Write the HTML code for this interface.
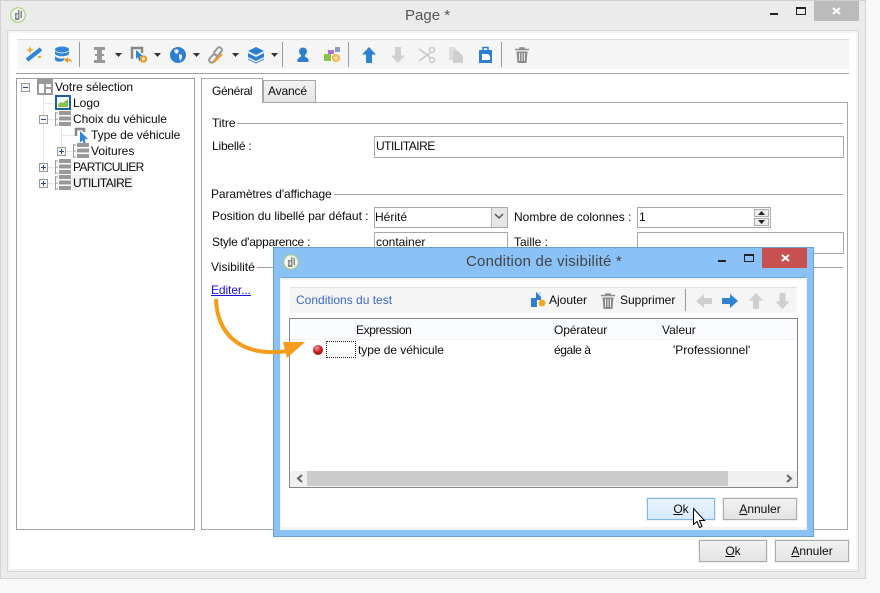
<!DOCTYPE html>
<html lang="fr"><head><meta charset="utf-8"><title>Page</title>
<style>
html,body{margin:0;padding:0;width:880px;height:593px;overflow:hidden;background:#f8f8f8}
body{position:relative;font-family:"Liberation Sans",sans-serif;font-size:12px;color:#0a0a0a}
div{position:absolute;box-sizing:border-box}
.t{white-space:nowrap;line-height:16px;height:16px}
.in{background:#fff;border:1px solid #a8a8a8}
.btn{background:linear-gradient(#f2f2f2,#e4e4e4);border:1px solid #ababab;outline:1px solid #f0f0f0;text-align:center;line-height:21px;color:#0a0a0a}
.btn u{text-decoration:underline}
.ln{background:#a0a0a0;height:1px}
svg{position:absolute;left:0;top:0}
</style></head><body>
<!-- main window -->
<div style="left:0;top:0;width:866px;height:579px;background:#ebebeb;border:1px solid #d4d4d4;border-top-color:#d0d0d0"></div>
<div style="left:7px;top:30px;width:852px;height:542px;background:#fff;border:1px solid #d8d8d8;border-bottom:0;border-top:1px solid #d8d8d8"></div>
<div style="left:8px;top:31px;width:2px;height:539px;background:#f4f4f4"></div>
<div style="left:856px;top:31px;width:2px;height:539px;background:#f4f4f4"></div>
<div style="left:8px;top:31px;width:850px;height:2px;background:#f4f4f4"></div>
<div style="left:8px;top:569px;width:850px;height:2px;background:#f0f0f0"></div>
<div style="left:7px;top:571px;width:852px;height:1px;background:#d8d8d8"></div>
<div class="t" style="left:405px;top:8px;font-size:15px;color:#555">Page *</div>
<div style="left:814px;top:1px;width:45px;height:20px;background:#bbb"></div>
<!-- main toolbar -->
<div style="left:17px;top:39px;width:832px;height:30px;background:#f5f5f5;border-top:1px solid #ddd"></div>
<div class="ln" style="left:16px;top:73px;width:833px"></div>
<!-- tree -->
<div style="left:16px;top:78px;width:179px;height:452px;background:#fff;border:1px solid #a0a0a0"></div>
<div style="left:72px;top:175px;width:61px;height:16px;background:#f0f0f0"></div>
<div class="t" style="left:55px;top:79px;letter-spacing:-.05px">Votre sélection</div>
<div class="t" style="left:73px;top:95px">Logo</div>
<div class="t" style="left:73px;top:111px;letter-spacing:-.05px">Choix du véhicule</div>
<div class="t" style="left:91px;top:127px;letter-spacing:-.05px">Type de véhicule</div>
<div class="t" style="left:91px;top:143px">Voitures</div>
<div class="t" style="left:73px;top:159px;letter-spacing:-.7px">PARTICULIER</div>
<div class="t" style="left:73px;top:175px;letter-spacing:-.5px">UTILITAIRE</div>
<!-- tabs -->
<div style="left:201px;top:102px;width:647px;height:428px;background:#fff;border:1px solid #a8a8a8"></div>
<div style="left:263px;top:80px;width:53px;height:23px;background:linear-gradient(#f2f2f2,#e6e6e6);border:1px solid #a8a8a8"></div>
<div style="left:201px;top:78px;width:62px;height:25px;background:#fff;border:1px solid #a8a8a8;border-bottom:0"></div>
<div class="t" style="left:212px;top:83px;letter-spacing:-.35px">Général</div>
<div class="t" style="left:268px;top:83px;letter-spacing:-.15px">Avancé</div>
<!-- form -->
<div class="t" style="left:212px;top:115px">Titre</div>
<div class="ln" style="left:237px;top:123px;width:606px"></div>
<div class="t" style="left:212px;top:138px;letter-spacing:-.2px">Libellé :</div>
<div class="in" style="left:374px;top:136px;width:470px;height:22px"></div>
<div class="t" style="left:376px;top:138px;letter-spacing:-.5px">UTILITAIRE</div>
<div class="t" style="left:211px;top:186px;letter-spacing:-.1px">Paramètres d'affichage</div>
<div class="ln" style="left:334px;top:194px;width:509px"></div>
<div class="t" style="left:212px;top:208px;letter-spacing:-.03px">Position du libellé par défaut :</div>
<div class="in" style="left:374px;top:207px;width:134px;height:21px"></div>
<div style="left:491px;top:208px;width:16px;height:19px;background:#e6e6e6;border-left:1px solid #b8b8b8"></div>
<div class="t" style="left:375px;top:209px">Hérité</div>
<div class="t" style="left:514px;top:209px">Nombre de colonnes :</div>
<div class="in" style="left:637px;top:207px;width:134px;height:21px"></div>
<div class="t" style="left:639px;top:209px">1</div>
<div style="left:754px;top:209px;width:15px;height:8px;background:#eee;border:1px solid #aaa"></div>
<div style="left:754px;top:218px;width:15px;height:8px;background:#eee;border:1px solid #aaa"></div>
<div class="t" style="left:212px;top:234px;letter-spacing:-.22px">Style d'apparence :</div>
<div class="in" style="left:374px;top:232px;width:134px;height:22px"></div>
<div class="t" style="left:376px;top:234px">container</div>
<div class="t" style="left:514px;top:234px">Taille :</div>
<div class="in" style="left:637px;top:232px;width:207px;height:22px"></div>
<div class="t" style="left:211px;top:259px">Visibilité</div>
<div class="ln" style="left:257px;top:267px;width:586px"></div>
<div class="t" style="left:211px;top:282px;color:#1a0dd8;text-decoration:underline;letter-spacing:-.1px">Editer...</div>
<!-- main buttons -->
<div class="btn" style="left:699px;top:540px;width:68px;height:22px"><u>O</u>k</div>
<div class="btn" style="left:775px;top:540px;width:74px;height:22px"><u>A</u>nnuler</div>
<!-- dialog -->
<div style="left:273px;top:247px;width:541px;height:290px;background:#8ac2f8;border:1px solid #6b9fd0"></div>
<div style="left:280px;top:277px;width:527px;height:253px;background:#fff;border:1px solid #f0f0f0;outline:0;border-top:1px solid #6fa6da"></div>
<div style="left:281px;top:278px;width:525px;height:2px;background:#f2f2f2"></div>
<div style="left:281px;top:527px;width:525px;height:2px;background:#f2f2f2"></div>
<div class="t" style="left:466px;top:254px;font-size:15px;letter-spacing:.2px;color:#444">Condition de visibilité *</div>
<div style="left:762px;top:248px;width:45px;height:20px;background:#c75050"></div>
<div style="left:290px;top:287px;width:507px;height:26px;background:#f5f5f5;border-top:1px solid #e0e0e0"></div>
<div class="t" style="left:296px;top:292px;color:#3a66c8">Conditions du test</div>
<div class="t" style="left:549px;top:292px">Ajouter</div>
<div class="t" style="left:620px;top:292px">Supprimer</div>
<div style="left:289px;top:318px;width:509px;height:170px;background:#fff;border:1px solid #85858e"></div>
<div style="left:290px;top:319px;width:507px;height:21px;background:#fbfcfe;border-bottom:1px solid #edf2f9"></div>
<div style="left:355px;top:319px;width:1px;height:20px;background:#eef2f8"></div>
<div style="left:553px;top:319px;width:1px;height:20px;background:#eef2f8"></div>
<div style="left:661px;top:319px;width:1px;height:20px;background:#eef2f8"></div>
<div class="t" style="left:356px;top:322px;letter-spacing:-.4px">Expression</div>
<div class="t" style="left:554px;top:322px;letter-spacing:-.1px">Opérateur</div>
<div class="t" style="left:662px;top:322px">Valeur</div>
<div style="left:326px;top:341px;width:30px;height:17px;border:1px dotted #222"></div>
<div class="t" style="left:358px;top:342px;letter-spacing:-.05px">type de véhicule</div>
<div class="t" style="left:554px;top:342px;letter-spacing:-.4px">égale à</div>
<div class="t" style="left:673px;top:342px">'Professionnel'</div>
<div style="left:290px;top:471px;width:507px;height:16px;background:#f0f0f0"></div>
<div style="left:307px;top:471px;width:421px;height:15px;background:#ccc"></div>
<div class="btn" style="left:647px;top:498px;width:68px;height:22px;background:linear-gradient(#e9f4fd,#d7eafb);border-color:#7db7ea"><u>O</u>k</div>
<div class="btn" style="left:723px;top:498px;width:74px;height:22px"><u>A</u>nnuler</div>
<svg width="880" height="593" viewBox="0 0 880 593">
<defs>
<symbol id="logo" viewBox="0 0 16 16" overflow="visible"><circle cx="8" cy="8" r="7.300" fill="#f2f2f2" stroke="#9ccc65" stroke-width="1"/><path d="M5 6h3V3h1.500v10H5zM10.500 4H12v7h-1.500z" fill="#8a8a8a"/><path d="M6.500 7.500H8V11H6.500z" fill="#eee"/></symbol>
<symbol id="stack" viewBox="0 0 16 16" overflow="visible"><path d="M.5 1v14M.5 2H3M.5 8H3M.5 14H3" stroke="#999" fill="none"/><path d="M4 0h12v4H4zM4 5.500h12v4H4zM4 11h12v4H4z" fill="#999"/></symbol>
<symbol id="plus" viewBox="0 0 9 9" overflow="visible"><rect x=".5" y=".5" width="8" height="8" fill="#f4f4f4" stroke="#9a9a9a"/><path d="M2 4.500h5M4.500 2v5" stroke="#2e4a7a"/></symbol>
<symbol id="minus" viewBox="0 0 9 9" overflow="visible"><rect x=".5" y=".5" width="8" height="8" fill="#f4f4f4" stroke="#9a9a9a"/><path d="M2 4.500h5" stroke="#2e4a7a"/></symbol>
<symbol id="up" viewBox="0 0 14 16" overflow="visible"><path d="M7 0L14 7.500H10V16H4V7.500H0z"/></symbol>
<symbol id="trash" viewBox="0 0 14 16" overflow="visible"><path d="M0 2.500h14M5 2.500V1h4v1.500" stroke="#8a8a8a" stroke-width="1.500" fill="none"/><path d="M1.500 4.500h11L11.500 16h-9z" fill="#8a8a8a"/><path d="M4.500 6v8M7 6v8M9.500 6v8" stroke="#e8e8e8"/></symbol>
<symbol id="tri" viewBox="0 0 7 4" overflow="visible"><path d="M0 0h7L3.500 4z" fill="#333"/></symbol>
</defs>
<use href="#logo" x="10" y="7" width="16" height="16"/>
<use href="#logo" x="283" y="254" width="16" height="16"/>
<!-- window controls -->
<path d="M770 13h8v2h-8zM718 260h8v2h-8z" fill="#222"/>
<rect x="796.500" y="7.500" width="9" height="7" fill="none" stroke="#222"/><path d="M796 7h10v2h-10z" fill="#222"/>
<rect x="744.500" y="254.500" width="9" height="7" fill="none" stroke="#222"/><path d="M744 254h10v2h-10z" fill="#222"/>
<path d="M833 8l7 6M840 8l-7 6M782 255l7 6M789 255l-7 6" stroke="#fff" stroke-width="2"/>
<!-- toolbar separators -->
<path d="M79.500 42v25M282.500 42v25M348.500 42v25M501.500 42v25" stroke="#9a9a9a"/>
<path d="M685.500 289v22" stroke="#9a9a9a"/>
<!-- wand -->
<path d="M27 60L41 49" stroke="#2f86d6" stroke-width="4"/><path d="M29 49l1-3 1 3 3 1-3 1-1 3-1-3-3-1zM38 56h3v2h-3z" fill="#f5a623"/>
<!-- db -->
<ellipse cx="62" cy="49.500" rx="7" ry="3" fill="#2f86d6"/><path d="M55 51c2 3 12 3 14 0v3c-2 3-12 3-14 0zM55 56c2 3 8 3 10 2l-2 3c-3 1-7 1-8-1z" fill="#2f86d6"/><path d="M64 60l4-3v2c3 0 4 2 4 4-1-2-2-2-4-2v2z" fill="#f09a20"/>
<!-- I-beam -->
<path d="M94 47h11v3h-3v4h2v2h-2v4h3v3H94v-3h3v-4h-2v-2h2v-4h-3z" fill="#999"/>
<!-- drop triangles -->
<use href="#tri" x="115" y="53" width="7" height="4"/><use href="#tri" x="154" y="53" width="7" height="4"/><use href="#tri" x="193" y="53" width="7" height="4"/><use href="#tri" x="232" y="53" width="7" height="4"/><use href="#tri" x="271" y="53" width="7" height="4"/>
<!-- cursor gear -->
<path d="M132 59V48h10v5" fill="none" stroke="#888" stroke-width="2.500"/><path d="M136 50l7 6-3 .5 1 4-2 .5-1-4-2 2z" fill="#2f86d6"/><circle cx="143.500" cy="59" r="2.600" fill="none" stroke="#f09a20" stroke-width="2.200"/>
<!-- globe -->
<circle cx="178" cy="55" r="8" fill="#2f7fd0"/><path d="M174 50l3-1 2 2-2 3-2-1zM179 54l3 1 0 3-2 3-1-4z" fill="#e8eef5"/>
<!-- link -->
<rect x="215.500" y="47" width="5" height="9" rx="2" transform="rotate(40 218 51.500)" fill="none" stroke="#999" stroke-width="2"/>
<rect x="210.500" y="54" width="5" height="9" rx="2" transform="rotate(40 213 58.500)" fill="none" stroke="#999" stroke-width="2"/>
<path d="M214 62l8-8" stroke="#f09a20" stroke-width="2"/>
<!-- layers -->
<path d="M256 47l8 4-8 4-8-4z" fill="#2f7fd0"/><path d="M248 53l8 4 8-4v4l-8 4-8-4zM248 58.500l8 4 8-4v1l-8 4-8-4z" fill="#2f7fd0"/>
<!-- person -->
<circle cx="303" cy="51.500" r="4" fill="#2f7fd0"/><path d="M301 55h4v1.500l3.500 2.500v3h-11v-3l3.500-2.500z" fill="#2f7fd0"/>
<!-- shapes -->
<path d="M324 54h7v7h-7z" fill="#8bc34a"/><path d="M328 50h6v4h-6z" fill="#b76fd8"/><path d="M335 47h5v5h-5z" fill="#8a9fc0"/><circle cx="336" cy="58" r="4" fill="#f5b041"/><path d="M333.500 58h5M336 55.500v5" stroke="#fff"/>
<!-- arrows -->
<use href="#up" x="362" y="47" width="14" height="16" fill="#2f83d4"/>
<use href="#up" transform="rotate(180 398 55)" x="391" y="47" width="14" height="16" fill="#cfcfcf"/>
<!-- scissors -->
<circle cx="432" cy="50" r="2.500" fill="none" stroke="#c8c8c8" stroke-width="1.500"/><circle cx="432" cy="60" r="2.500" fill="none" stroke="#c8c8c8" stroke-width="1.500"/><path d="M419 49l11 8M419 61l11-8" stroke="#c8c8c8" stroke-width="1.500"/>
<!-- copy -->
<path d="M449 47h5l3 3v10h-8z" fill="#ddd"/><path d="M453 51h5l5 5v7h-10z" fill="#cfcfcf"/>
<!-- paste -->
<path d="M479 50h13v13h-13z" fill="#2f7fd0"/><path d="M483 47.500h5v4h-5z" fill="none" stroke="#2f7fd0" stroke-width="1.500"/><path d="M482 54h6l2 2v4h-8z" fill="#fff"/>
<use href="#trash" x="515" y="47" width="14" height="16"/>
<!-- tree lines -->
<path d="M43.500 95v20M43.500 124v39M43.500 172v7M61.500 127v20M61 135.500h14M43 103.500h12M47 119.500h8M47 167.500h8M47 183.500h8M65 151.500h8" stroke="#e6e6e6" fill="none"/>
<!-- tree icons -->
<path d="M37 79h16v16H37z" fill="#999"/><path d="M39 84h5v9h-5zM46 84h5v3h-5zM46 89h5v4h-5z" fill="#fff"/>
<use href="#minus" x="21" y="83" width="9" height="9"/>
<rect x="56" y="96" width="14" height="13" fill="#f4f7fa" stroke="#1d5f9e" stroke-width="2"/><path d="M58 107v-3l3-2 2 1 2-2 3-2v8z" fill="#8bc34a"/>
<use href="#minus" x="39" y="115" width="9" height="9"/><use href="#stack" x="55" y="111" width="16" height="16"/>
<path d="M76 136v-7h8v3" fill="none" stroke="#888" stroke-width="2.500"/><path d="M80 131l8 8-3.500 .5 1.500 4.500-2 .5-1.500-4-2.500 2z" fill="#2f86d6"/>
<use href="#plus" x="57" y="147" width="9" height="9"/><use href="#stack" x="73" y="143" width="16" height="16"/>
<use href="#plus" x="39" y="163" width="9" height="9"/><use href="#stack" x="55" y="159" width="16" height="16"/>
<use href="#plus" x="39" y="179" width="9" height="9"/><use href="#stack" x="55" y="175" width="16" height="16"/>
<!-- combo + spin -->
<path d="M495 214l4 4 4-4" fill="none" stroke="#555" stroke-width="1.500"/>
<path d="M758 215h7l-3.500-4zM758 220h7l-3.500 4z" fill="#222"/>
<!-- dialog toolbar icons -->
<path d="M536 292h5v8h-5zM531 298h6v9h-6z" fill="#2f7fd0"/><path d="M536 292l5 0 0 5z" fill="#cfe0f2"/><circle cx="542" cy="303" r="3.500" fill="#f5a623"/>
<use href="#trash" x="601" y="293" width="14" height="16"/>
<path d="M712 298v6h-8v4l-8-7 8-7v4z" fill="#cfcfcf"/>
<path d="M722 298v6h8v4l8-7-8-7v4z" fill="#2f83d4"/>
<use href="#up" x="749" y="293" width="14" height="16" fill="#cfcfcf"/>
<use href="#up" transform="rotate(180 782.500 301)" x="775.500" y="293" width="14" height="16" fill="#cfcfcf"/>
<!-- bullet -->
<defs><radialGradient id="rb" cx=".4" cy=".3" r=".8"><stop offset="0" stop-color="#f7a0a0"/><stop offset=".5" stop-color="#d02020"/><stop offset="1" stop-color="#801010"/></radialGradient></defs>
<circle cx="318" cy="350" r="5" fill="url(#rb)"/>
<!-- scroll arrows -->
<path d="M302 475l-4 3.500 4 3.500" fill="none" stroke="#666" stroke-width="2"/>
<path d="M787 475l4 3.500-4 3.500" fill="none" stroke="#666" stroke-width="2"/>
<!-- orange arrow -->
<path d="M216 299C217 330 236 358 288 351" fill="none" stroke="#f59c1a" stroke-width="4"/>
<path d="M283 342L305 342L287 358z" fill="#f59c1a"/>
<!-- mouse cursor -->
<path d="M693.500 508.500v16l3.500-3 2.500 6 2.500-1-2.500-6h5z" fill="#fff" stroke="#000"/>
</svg>
</body></html>
